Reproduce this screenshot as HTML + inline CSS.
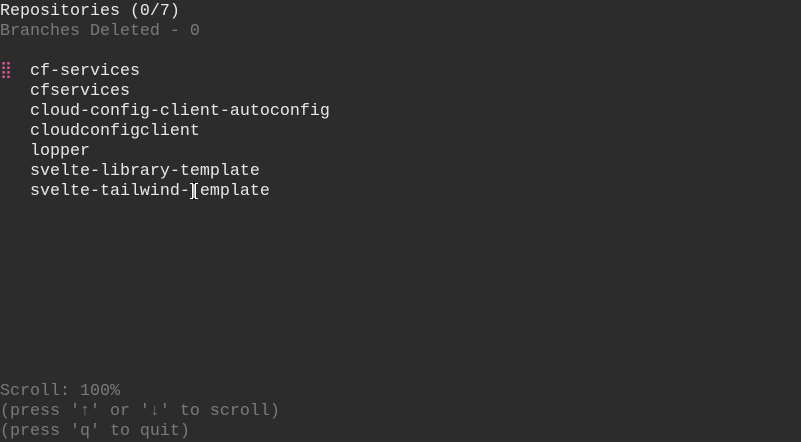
<!DOCTYPE html>
<html><head><meta charset="utf-8"><style>
html,body{margin:0;padding:0;background:#2c2c2c;width:801px;height:441px;overflow:hidden}
.l{position:absolute;left:0;font-family:"Liberation Mono","DejaVu Sans Mono",monospace;font-size:16.67px;line-height:20px;height:20px;white-space:pre;color:#e8e8e8;margin-top:2px}
.g{color:#7a7a7a}
.p{color:#e8559d}
</style></head><body>
<div class="l" style="top:0">Repositories (0/7)</div>
<div class="l g" style="top:20px">Branches Deleted - 0</div>
<div class="l p" style="top:60px">⣿</div>
<div class="l" style="top:60px">   cf-services</div>
<div class="l" style="top:80px">   cfservices</div>
<div class="l" style="top:100px">   cloud-config-client-autoconfig</div>
<div class="l" style="top:120px">   cloudconfigclient</div>
<div class="l" style="top:140px">   lopper</div>
<div class="l" style="top:160px">   svelte-library-template</div>
<div class="l" style="top:180px">   svelte-tailwind- emplate</div>
<svg style="position:absolute;left:188px;top:182px" width="12" height="18" viewBox="0 0 12 18"><path d="M2 1.5h2.5v15H2M10 1.5H7.5v15H10M4.5 1.5h3M4.5 16.5h3" stroke="#000" stroke-width="2.6" fill="none"/><path d="M2 1.5h2.5v15H2M10 1.5H7.5v15H10" stroke="#fff" stroke-width="1.2" fill="none"/><path d="M6 2v14" stroke="#fff" stroke-width="1.2"/></svg>
<div class="l g" style="top:380px">Scroll: 100%</div>
<div class="l g" style="top:400px">(press '↑' or '↓' to scroll)</div>
<div class="l g" style="top:420px">(press 'q' to quit)</div>
</body></html>
